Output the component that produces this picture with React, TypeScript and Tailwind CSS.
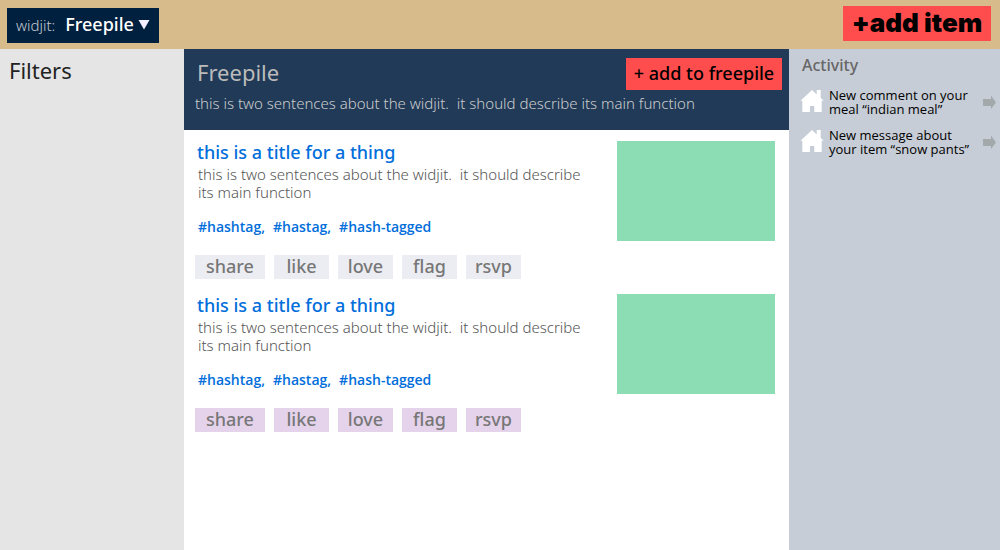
import React from "react";

const description =
  "this is two sentences about the widjit.\u00a0 it should describe its main function";

const tags = ["#hashtag", "#hastag", "#hash-tagged"];

const actions = [
  { label: "share", width: "w-[70px]" },
  { label: "like", width: "w-[55px]" },
  { label: "love", width: "w-[55px]" },
  { label: "flag", width: "w-[55px]" },
  { label: "rsvp", width: "w-[55px]" },
];

const items = [
  { id: 1, title: "this is a title for a thing", actionColor: "bg-[#ecedf2]" },
  { id: 2, title: "this is a title for a thing", actionColor: "bg-[#e5d3eb]" },
];

const activity = [
  { id: 1, lines: ["New comment on your", "meal “indian meal”"] },
  { id: 2, lines: ["New message about", "your item “snow pants”"] },
];

function HomeIcon() {
  return (
    <svg width="24" height="24" viewBox="0 0 24 24" className="shrink-0" aria-hidden="true">
      <path
        fill="#fff"
        d="M12 0 16.700 4.500V0h4v7.700L23.700 10.700H21.700V22H14.300V16H10V22H2.300V10.700H0.500Z"
      />
    </svg>
  );
}

function ArrowIcon() {
  return (
    <svg width="13" height="14" viewBox="0 0 13 14" aria-hidden="true">
      <path fill="#a3a8ab" d="M0 4H8V0.500L13 7.500 8 14V11H0Z" />
    </svg>
  );
}

function TopBar() {
  return (
    <header className="flex h-[49px] items-start justify-between bg-[#d7bb8b] pr-[9px] pl-[7px]">
      <div className="relative mt-2 flex h-[35px] items-center bg-[#00203f] pl-[9px] text-white">
        <label htmlFor="widjit" className="mr-[10px] text-[15px] font-light text-[#c3c9d2]">
          widjit:
        </label>
        <select
          id="widjit"
          className="h-[35px] w-[94px] cursor-pointer appearance-none bg-transparent pb-[2px] text-[18px] font-medium outline-none"
        >
          <option>Freepile</option>
        </select>
        <svg
          width="12"
          height="10"
          viewBox="0 0 12 10"
          className="pointer-events-none absolute top-[12px] right-[9px]"
          aria-hidden="true"
        >
          <path fill="#f5f0ff" d="M0.500 0h11L6 9.500Z" />
        </svg>
      </div>
      <button className="mt-[6px] flex h-[35px] w-[148px] items-center justify-center bg-[#ff4d4d] pb-[2px] font-['Arial_Black','Inter',sans-serif] text-[26px] font-black whitespace-nowrap text-black">
        +add item
      </button>
    </header>
  );
}

function Item({ title, actionColor }: { title: string; actionColor: string }) {
  return (
    <article className="flex h-[153px] items-start justify-between pt-[11px] pr-[14px] pl-[11px]">
      <div>
        <h2 className="pb-[2px] pl-[2px] text-[18px] leading-[22px] font-medium text-[#006edb]">
          <a href="#item">{title}</a>
        </h2>
        <p className="w-[400px] pl-[3px] text-[15px] leading-[18px] font-light text-[#555]">
          {description}
        </p>
        <ul className="mt-[17px] flex gap-2 pl-[3px] font-['Open_Sans',sans-serif] text-[14px] leading-[18px] font-semibold text-[#006edb]">
          {tags.map((tag, i) => (
            <li key={tag}>
              <a href="#tag">{tag}</a>
              {i < tags.length - 1 && ","}
            </li>
          ))}
        </ul>
        <div className="mt-[19px] flex gap-[9px]">
          {actions.map((action) => (
            <button
              key={action.label}
              className={`flex h-6 items-center justify-center pb-[2px] text-[18px] leading-[22px] font-medium text-[#777] ${action.width} ${actionColor}`}
            >
              {action.label}
            </button>
          ))}
        </div>
      </div>
      <div className="h-[100px] w-[158px] shrink-0 bg-[#8cddb4]" />
    </article>
  );
}

export default function App() {
  return (
    <div className="flex min-h-screen flex-col bg-white font-['Noto_Sans','Open_Sans',sans-serif]">
      <TopBar />
      <div className="flex flex-1">
        <aside className="w-[184px] shrink-0 bg-[#e5e5e5] px-[9px] pt-2">
          <h2 className="text-[22px] leading-[26px] text-[#222]">Filters</h2>
        </aside>

        <main className="min-w-0 flex-1">
          <section className="h-[81px] bg-[#203a58] pr-[7px] pl-[11px] text-[#bbb]">
            <div className="flex items-start justify-between pt-[9px]">
              <h1 className="pt-[1px] pl-[2px] text-[22px] leading-[26px]">Freepile</h1>
              <button className="h-8 w-[156px] bg-[#ff4d4d] pb-[2px] text-[18px] leading-[30px] font-medium text-black">
                + add to freepile
              </button>
            </div>
            <p className="mt-1 text-[15px] leading-[18px] font-light text-[#ccc]">{description}</p>
          </section>
          {items.map((item) => (
            <Item key={item.id} title={item.title} actionColor={item.actionColor} />
          ))}
        </main>

        <aside className="w-[211px] shrink-0 bg-[#c7cdd6] pt-1 pr-1 pl-[11px]">
          <h2 className="pl-[2px] text-[16px] leading-6 font-medium text-[#666]">Activity</h2>
          <ul className="mt-[11px] flex flex-col gap-3 font-['Open_Sans',sans-serif]">
            {activity.map((entry) => (
              <li key={entry.id}>
                <a href="#activity" className="flex items-center">
                  <HomeIcon />
                  <span className="ml-[5px] flex-1 text-[13px] leading-[14px] whitespace-nowrap text-black">
                    {entry.lines[0]}
                    <br />
                    {entry.lines[1]}
                  </span>
                  <ArrowIcon />
                </a>
              </li>
            ))}
          </ul>
        </aside>
      </div>
    </div>
  );
}
